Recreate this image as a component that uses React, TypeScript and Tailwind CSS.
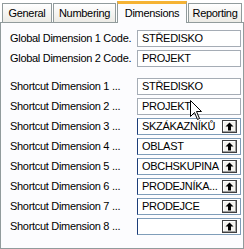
import React from 'react';

const rows = [
  { label: 'Shortcut Dimension 1 ...', value: 'STŘEDISKO', lookup: false },
  { label: 'Shortcut Dimension 2 ...', value: 'PROJEKT', lookup: false },
  { label: 'Shortcut Dimension 3 ...', value: 'SKZÁKAZNÍKŮ', lookup: true },
  { label: 'Shortcut Dimension 4 ...', value: 'OBLAST', lookup: true },
  { label: 'Shortcut Dimension 5 ...', value: 'OBCHSKUPINA', lookup: true },
  { label: 'Shortcut Dimension 6 ...', value: 'PRODEJNÍKA...', lookup: true },
  { label: 'Shortcut Dimension 7 ...', value: 'PRODEJCE', lookup: true },
  { label: 'Shortcut Dimension 8 ...', value: '', lookup: true },
];

function LookupButton() {
  return (
    <div className="absolute right-[3px] top-[1px] w-[15px] h-[13px] border border-[#404040] bg-[#f4f3ee] flex items-center justify-center shadow-[inset_-1px_-1px_0_#a0a0a0,inset_1px_1px_0_#ffffff]">
      <svg width="9" height="9" viewBox="0 0 9 9">
        <path d="M4.5 0.5 L8.5 4.5 L6 4.5 L6 8.5 L3 8.5 L3 4.5 L0.5 4.5 Z" fill="#000" />
      </svg>
    </div>
  );
}

function Field({ value, lookup }: { value: string; lookup: boolean }) {
  return (
    <div
      className={
        'relative shrink-0 w-[104px] h-[17px] bg-white flex items-center pl-[4px] ' +
        (lookup ? 'border border-[#7f9db9] border-l-[#1c3c78]' : 'border border-[#a5acb5]')
      }
    >
      <span className="leading-none whitespace-nowrap">{value}</span>
      {lookup && <LookupButton />}
    </div>
  );
}

function Row({ label, value, lookup }: { label: string; value: string; lookup: boolean }) {
  return (
    <div className="flex items-center h-[17px]">
      <div className="w-[136px] shrink-0 pl-[9px] whitespace-nowrap overflow-hidden">{label}</div>
      <Field value={value} lookup={lookup} />
    </div>
  );
}

function Tab({ label, width, active }: { label: string; width: string; active?: boolean }) {
  if (active) {
    return (
      <div
        className={
          'relative z-10 -mb-[1px] h-[22px] flex items-center justify-center border-x border-[#919b9c] bg-[#fcfcfe] border-t-[3px] border-t-[#f5b335] ' +
          width
        }
      >
        {label}
      </div>
    );
  }
  return (
    <div
      className={
        'h-[19px] flex items-center justify-center border border-b-0 border-[#919b9c] bg-gradient-to-b from-white to-[#ecebe6] ' +
        width
      }
    >
      {label}
    </div>
  );
}

export default function App() {
  return (
    <div
      className="relative w-[244px] h-[249px] bg-white overflow-hidden text-[11px] tracking-[-0.3px] text-black"
      style={{ fontFamily: '"Liberation Sans", Arial, sans-serif' }}
    >
      <div className="flex items-end h-[22px] pl-[2px] gap-[1px]">
        <Tab label="General" width="w-[50px]" />
        <Tab label="Numbering" width="w-[63px]" />
        <Tab label="Dimensions" width="w-[70px]" active />
        <Tab label="Reporting" width="w-[54px]" />
      </div>
      <div className="h-[227px] border border-[#919b9c] bg-[#fcfcfe] pt-[7px] flex flex-col">
        <div className="flex flex-col gap-[3px]">
          <Row label="Global Dimension 1 Code." value="STŘEDISKO" lookup={false} />
          <Row label="Global Dimension 2 Code." value="PROJEKT" lookup={false} />
        </div>
        <div className="flex flex-col gap-[3px] mt-[11px]">
          {rows.map((r) => (
            <Row key={r.label} {...r} />
          ))}
        </div>
      </div>
      {/* mouse pointer */}
      <svg className="absolute left-[190px] top-[100px]" width="13" height="21" viewBox="0 0 13 21">
        <path
          d="M0.5 0.5 L0.5 16.5 L4.5 12.5 L7.5 19.5 L9.5 18.5 L6.5 11.5 L11.5 11.5 Z"
          fill="#fff"
          stroke="#000"
          strokeWidth="1"
        />
      </svg>
    </div>
  );
}
